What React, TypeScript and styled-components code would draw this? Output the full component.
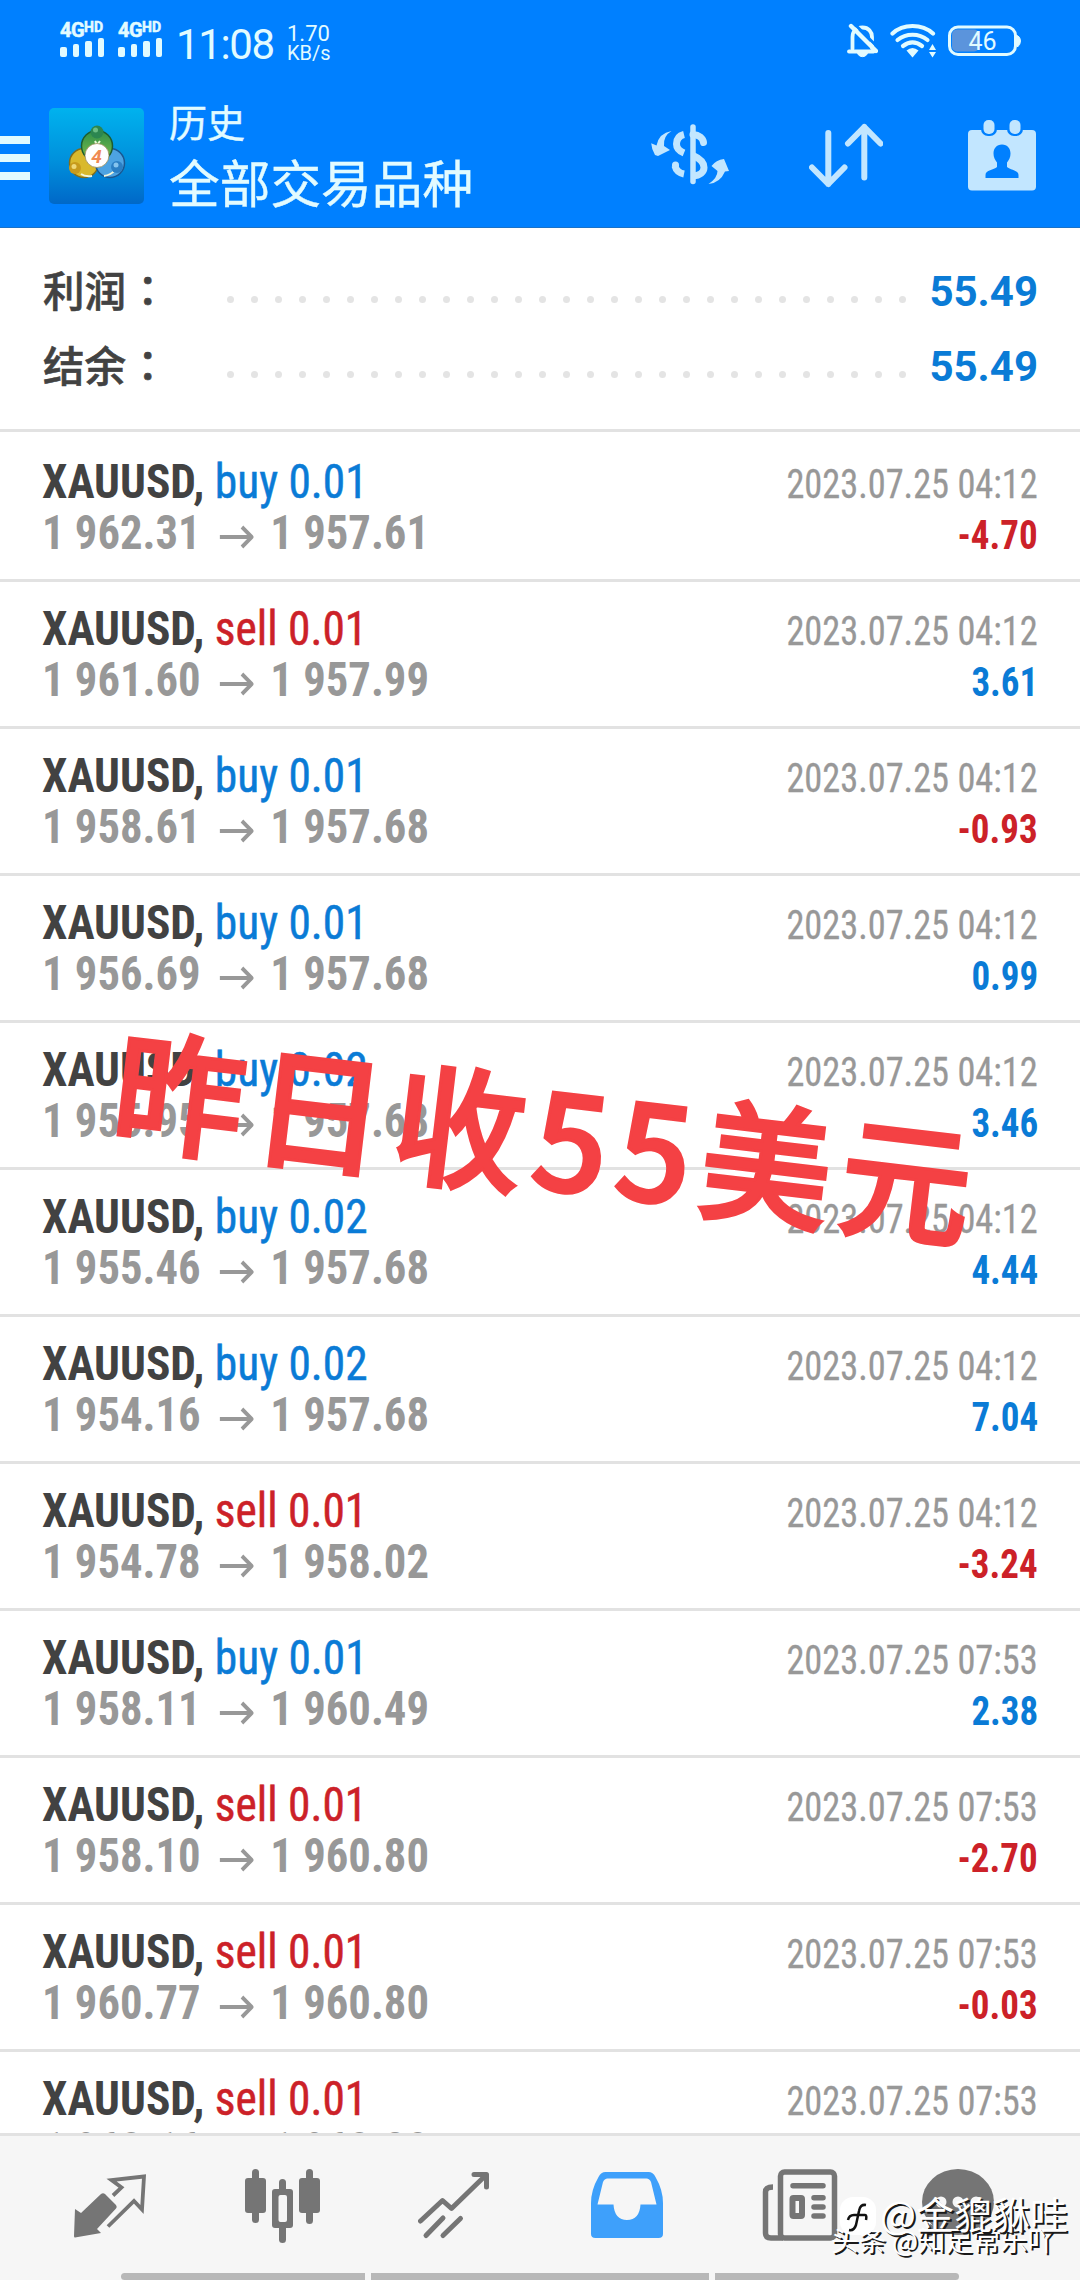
import React from "react";
import styled, { createGlobalStyle } from "styled-components";

const BLUE = "#0a7bd6";
const RED = "#cc2128";
const PALE = "#c2e6ff";
const GREY = "#757575";
const CJK = `"Noto Sans CJK SC"`;

const GlobalStyle = createGlobalStyle`
  * { box-sizing: border-box; }
  body { margin: 0; background: #fff; font-family: Roboto, ${CJK}, sans-serif; }
`;

const Screen = styled.div`
  position: relative;
  width: 1080px;
  height: 2280px;
  overflow: hidden;
  display: flex;
  flex-direction: column;
  background: #fff;
`;

const Header = styled.header`
  height: 228px;
  flex: none;
  background: #0080ff;
  border-bottom: 1px solid #1a72c8;
  color: #e2fbff;
`;

const StatusBar = styled.div`
  height: 84px;
  padding: 22px 59px 0 60px;
  display: flex;
  align-items: flex-start;
`;

const Signal = styled.div`
  width: 58px;
`;

const SignalLabel = styled.div`
  display: flex;
  font: 700 20px/16px Roboto, sans-serif;
  letter-spacing: -0.5px;
  -webkit-text-stroke: 0.5px #e2fbff;
  sup { font-size: 14px; line-height: 11px; letter-spacing: 0; }
`;

const SignalBars = styled.div`
  display: flex;
  align-items: flex-end;
  gap: 6px;
  height: 19px;
`;

const Bar = styled.i<{ $h: number }>`
  width: 6.5px;
  height: ${(p) => p.$h}px;
  border-radius: 2px;
  background: #e2fbff;
`;

const Clock = styled.div`
  font: 400 42px/46px Roboto, sans-serif;
  letter-spacing: -1.4px;
  width: 111px;
`;

const Speed = styled.div`
  display: flex;
  flex-direction: column;
  font: 400 22px/20px Roboto, sans-serif;
  padding-top: 2px;
  span + span { font-size: 20px; line-height: 19px; }
`;

const StatusIcons = styled.div`
  display: flex;
  gap: 12px;
  margin: 1px 0 0 auto;
`;

const Toolbar = styled.div`
  display: flex;
  align-items: flex-start;
  height: 143px;
  padding-right: 44px;
`;

const Burger = styled.div`
  width: 30px;
  display: flex;
  flex-direction: column;
  gap: 10px;
  margin-top: 52px;
  i { height: 8px; background: #e2fbff; }
`;

const AppLogo = styled.svg`
  margin: 24px 0 0 19px;
  flex: none;
`;

const Titles = styled.div`
  margin-left: 24px;
  font-family: ${CJK}, sans-serif;
  -webkit-text-stroke: 0.4px #e2fbff;
`;

const Subtitle = styled.div`
  font-size: 38px;
  line-height: 44px;
  margin-top: 15px;
`;

const Title = styled.div`
  font-size: 50.7px;
  line-height: 60px;
  margin-top: 8px;
`;

const Actions = styled.div`
  display: flex;
  margin-left: auto;
  gap: 85px;
  margin-top: 36px;
  svg { display: block; }
  svg:first-child { margin-right: -5px; }
`;

const Summary = styled.section`
  flex: none;
  height: 204px;
  padding: 26px 42px 0 43px;
  border-bottom: 3px solid #e2e2e2;
`;

const SummaryRow = styled.div`
  display: flex;
  align-items: center;
  height: 75px;
`;

const SummaryLabel = styled.div`
  width: 184px;
  padding-bottom: 6px;
  font: 500 41.500px/60px ${CJK}, sans-serif;
  color: #424242;
  -webkit-text-stroke: 0.6px #424242;
  span { font-family: "Noto Sans CJK JP", sans-serif; margin-left: 1px; }
`;

const Dots = styled.div`
  display: flex;
  justify-content: space-between;
  width: 679px;
  margin-top: 15px;
  i { width: 7px; height: 7px; border-radius: 50%; background: #e4e4e4; }
`;

const SummaryValue = styled.div`
  margin-left: auto;
  font: 700 42px/60px Roboto, sans-serif;
  color: ${BLUE};
`;

const List = styled.main`
  flex: none;
  height: 1701px;
  overflow: hidden;
`;

const Deal = styled.article`
  height: 147px;
  padding: 21px 42px 0 42px;
  border-bottom: 3px solid #e2e2e2;
  font-family: "Roboto Condensed", Roboto, sans-serif;
  font-stretch: 75%;
  &:first-child { height: 150px; padding-top: 24px; }
`;

const Line = styled.div`
  display: flex;
  justify-content: space-between;
  align-items: baseline;
  height: 51px;
  line-height: 51px;
`;

const Symbol = styled.div`
  font-size: 48px;
  font-weight: 700;
  color: #424242;
  transform: scaleX(0.945);
  transform-origin: left;
`;

const Side = styled.span<{ $sell: boolean }>`
  font-weight: 400;
  -webkit-text-stroke: 0.5px currentColor;
  color: ${(p) => (p.$sell ? RED : BLUE)};
`;

const Time = styled.div`
  font-size: 40px;
  color: #989898;
  -webkit-text-stroke: 0.3px #989898;
  transform: scaleX(0.908);
  transform-origin: right;
`;

const Prices = styled.div`
  font-size: 48px;
  font-weight: 700;
  color: #989898;
  display: flex;
  align-items: baseline;
  transform: scaleX(0.93);
  transform-origin: left;
  svg { margin: 0 18px 0 20px; }
`;

const Profit = styled.div<{ $loss: boolean }>`
  font-size: 40px;
  font-weight: 700;
  color: ${(p) => (p.$loss ? RED : BLUE)};
  transform: scaleX(0.925);
  transform-origin: right;
`;

const TabBar = styled.nav`
  flex: none;
  height: 147px;
  background: #f6f6f6;
  border-top: 3px solid #e2e2e2;
  display: flex;
  flex-direction: column;
  justify-content: space-between;
`;

const Tabs = styled.div`
  display: flex;
  gap: 97.5px;
  padding: 32px 0 0 73px;
  svg:nth-child(4) { margin: 0 2px 0 3px; }
  svg:last-child { margin-left: -14px; }
`;

const GestureBar = styled.div`
  display: flex;
  justify-content: center;
  gap: 6px;
  height: 7px;
`;

const Segment = styled.i<{ $w: number; $round?: string }>`
  width: ${(p) => p.$w}px;
  background: #b8b8b8;
  border-radius: ${(p) => p.$round || "0"};
`;

const Caption = styled.div`
  position: absolute;
  left: 112px;
  top: 1042px;
  font: 500 132px/180px ${CJK}, sans-serif;
  letter-spacing: 8.8px;
  -webkit-text-stroke: 3px #f44144;
  white-space: nowrap;
  color: #f44144;
  transform: rotate(6.8deg);
`;

const Watermark = styled.div<{ $x: number; $y: number; $size: number }>`
  position: absolute;
  left: ${(p) => p.$x}px;
  top: ${(p) => p.$y}px;
  display: flex;
  align-items: center;
  font: 400 ${(p) => p.$size}px/44px ${CJK}, sans-serif;
  white-space: nowrap;
  color: #fff;
  text-shadow: 2px 1.5px 0 #1a1a1a;
`;

const MarkBadge = styled.svg`
  margin-right: 2px;
`;

const SignalBlock = () => (
  <Signal>
    <SignalLabel>4G<sup>HD</sup></SignalLabel>
    <SignalBars>
      <Bar $h={10} /><Bar $h={13} /><Bar $h={16} /><Bar $h={19} />
    </SignalBars>
  </Signal>
);

const BellOff = () => (
  <svg width="31" height="36" viewBox="847.5 24 31 36" fill="none" stroke="#e2fbff" strokeWidth="3.8" strokeLinecap="round" strokeLinejoin="round">
    <path d="M853 50V38C853 32 857 28.500 863 28.500S872.500 33 872.500 38V49" />
    <path d="M849.500 52.500H874" />
    <path d="M858 54C859 59 867 59 868 54Z" fill="#e2fbff" strokeWidth="1" />
    <path d="M855.500 25.500L878.500 48.500" stroke="#0080ff" strokeWidth="3" />
    <path d="M851.500 27L876.500 52" strokeWidth="4.400" />
  </svg>
);

const Wifi = () => (
  <svg width="46" height="36" viewBox="890 24 46 36" fill="none" stroke="#e2fbff" strokeWidth="4.200" strokeLinecap="round">
    <path d="M892.500 34.500C903 24.500 922 24.500 933 34.500" />
    <path d="M897.500 41C906 34 919 34 927.500 41" />
    <path d="M903 47C909 42.500 916 42.500 922 47" />
    <path d="M906.500 51.500Q912.500 46.500 918.500 51.500L912.500 58.500Z" fill="#e2fbff" stroke="none" />
    <path d="M929 51L932.500 45L936 51ZM929 53L932.500 58.500L936 53Z" fill="#e2fbff" stroke="none" />
  </svg>
);

const Battery = () => (
  <svg width="73" height="36" viewBox="948 24 73 36">
    <rect x="952" y="30.500" width="27" height="22" rx="5" fill="#5b94dc" />
    <rect x="949.500" y="28" width="66" height="27.500" rx="8.500" fill="none" stroke="#e2fbff" strokeWidth="3" />
    <path d="M1017.500 36.500Q1020.500 38.500 1020.500 42T1017.500 48Z" fill="#e2fbff" stroke="#e2fbff" />
    <text x="982.500" y="50.500" textAnchor="middle" fontFamily="Roboto" fontSize="25" fill="#e2fbff">46</text>
  </svg>
);

const Logo = () => (
  <AppLogo width="96" height="96" viewBox="48 108 96 96">
    <defs>
      <linearGradient id="sky" x1="0" y1="0" x2="0" y2="1">
        <stop offset="0" stopColor="#00b2ee" />
        <stop offset="0.55" stopColor="#0090dc" />
        <stop offset="1" stopColor="#0068c8" />
      </linearGradient>
      <linearGradient id="leaf" x1="0" y1="0" x2="0" y2="1">
        <stop offset="0" stopColor="#2f8f4a" /><stop offset="1" stopColor="#7fc04a" />
      </linearGradient>
    </defs>
    <rect x="48" y="108" width="95" height="96" rx="5" fill="url(#sky)" />
    <circle cx="83" cy="163" r="14.500" fill="#d9b92c" stroke="#806d1c" strokeWidth="1.500" />
    <circle cx="109" cy="163" r="14.500" fill="#4da3e2" stroke="#1a5790" strokeWidth="1.500" />
    <circle cx="96" cy="146" r="15.500" fill="url(#leaf)" stroke="#1c5c30" strokeWidth="1.500" />
    <path d="M94 141L96 145L99 141" stroke="#e9f8d8" strokeWidth="2" fill="none" />
    <path d="M80 174Q84 177 91 176M103 176Q110 175 114 170" stroke="#f2f6dc" strokeWidth="2" fill="none" />
    <circle cx="96" cy="132" r="6.500" fill="#2c8650" /><circle cx="94.500" cy="130" r="2.500" fill="#6bbd84" />
    <circle cx="74" cy="168" r="6" fill="#c79a1c" /><circle cx="73" cy="166.500" r="2.500" fill="#efd878" />
    <circle cx="116" cy="167" r="6" fill="#2b7fc4" /><circle cx="115" cy="165" r="2.500" fill="#86c4ee" />
    <circle cx="96" cy="155.500" r="12" fill="#fff" stroke="#9b8d58" strokeWidth="0.800" />
    <text x="95.500" y="162.500" textAnchor="middle" fontFamily="Roboto" fontWeight="700" fontStyle="italic" fontSize="19" fill="#f08a52">4</text>
  </AppLogo>
);

const CurrencyIcon = () => (
  <svg width="78" height="72" viewBox="651 120 78 72" fill="none" stroke={PALE} strokeWidth="7">
    <path d="M684 134.500C678 136 676.500 140 676.500 144S679 151 684 153" />
    <path d="M675 166C676 170 679 173 684 174" />
    <path d="M675.500 165V165.500" strokeLinecap="round" />
    <path d="M693 134.500C699 135 703 138 703.500 142.500" strokeLinecap="round" />
    <path d="M693 155.500C701 159 704 162.500 704 167.500C704 172 700 175.500 693 176" />
    <path d="M693 127V181.500" strokeWidth="5.500" strokeLinecap="round" />
    <g fill={PALE} stroke="none">
      <path d="M671.500 131Q663 136 664 146L670 150L658 156L655 155Q651.500 149 651.200 143.300L656.500 145.500Q659 133 671.500 131Z" />
      <path d="M708.500 184Q717.500 178 717.500 171L711.500 166Q716 160 724 159L729 171L725 171.500Q720 183 708.500 184Z" />
    </g>
  </svg>
);

const SortIcon = () => (
  <svg width="74" height="72" viewBox="809 120 74 72" fill="none" stroke={PALE} strokeWidth="6" strokeLinecap="round" strokeLinejoin="round">
    <path d="M828.300 133V184M812 167.500L828.300 184L844.500 167.500" />
    <path d="M864.300 177.500V127M848 143.500L864.300 127L880.500 143.500" />
  </svg>
);

const CalendarIcon = () => (
  <svg width="68" height="72" viewBox="968 120 68 72">
    <rect x="968" y="130" width="68" height="60.500" rx="4" fill={PALE} />
    <rect x="981" y="117" width="16" height="19" rx="7" fill="#0080ff" />
    <rect x="1007" y="117" width="16" height="19" rx="7" fill="#0080ff" />
    <rect x="983.500" y="120" width="11" height="14" rx="5" fill={PALE} />
    <rect x="1009.500" y="120" width="11" height="14" rx="5" fill={PALE} />
    <path d="M1002 144.500C1007.500 144.500 1010.500 148.500 1010.500 153.500C1010.500 157.500 1009 160 1007 162.500V167C1010 170 1018.500 170 1018.500 175V178H985.500V175C985.500 170 994 170 997 167V162.500C995 160 993.500 157.500 993.500 153.500C993.500 148.500 996.500 144.500 1002 144.500Z" fill="#0080ff" />
  </svg>
);

const PriceArrow = () => (
  <svg width="37" height="24" viewBox="0 0 37 24" fill="none" stroke="#989898" strokeWidth="4">
    <path d="M0 12H34M24 2L34.500 12L24 22" strokeLinejoin="round" />
  </svg>
);

const QuotesIcon = () => (
  <svg width="74" height="76" viewBox="73 2168 74 76" fill="none" stroke={GREY} strokeWidth="3.800">
    <path d="M75 2209L81 2213L101 2194Q103 2192.500 105 2194L116 2205Q117.500 2207 116 2208.500L97 2229L101 2233L75 2237.500Q74 2237.500 74 2236Z" fill={GREY} stroke="none" />
    <path d="M113 2195.500L121.500 2187.500L111.500 2180L144 2176.500L142 2209.500L134 2201L108 2226.500" />
  </svg>
);

const ChartIcon = () => (
  <svg width="76" height="76" viewBox="244 2168 76 76" fill={GREY}>
    <rect x="244" y="2178" width="21" height="35" rx="3" /><rect x="251" y="2169" width="7" height="54" rx="3.500" />
    <rect x="298" y="2178" width="21" height="35" rx="3" /><rect x="305" y="2169" width="7" height="55" rx="3.500" />
    <rect x="278" y="2179" width="7" height="64" rx="3.500" />
    <rect x="271" y="2189" width="21" height="39" rx="3" /><rect x="277.500" y="2195" width="8.500" height="27" rx="2" fill="#f6f6f6" />
  </svg>
);

const TradeIcon = () => (
  <svg width="72" height="76" viewBox="418 2168 72 76" fill="none" stroke={GREY} strokeWidth="5" strokeLinecap="round" strokeLinejoin="round">
    <path d="M420.500 2221L442.500 2200.500L451.500 2208.500L485 2176" />
    <path d="M474 2174.500H486.500V2187" />
    <path d="M426 2235.500L443 2218M443 2235.500L460.500 2218.500" />
  </svg>
);

const InboxIcon = () => (
  <svg width="72" height="76" viewBox="590.500 2168 72 76">
    <path fillRule="evenodd" fill="#3ea0fb" d="M605 2172H648Q652.500 2172 655 2177Q662.500 2190 662.500 2203V2234Q662.500 2238 658 2238H595Q590.500 2238 590.500 2234V2203Q590.500 2190 598 2177Q600.500 2172 605 2172ZM607 2178.500Q604 2178.500 602.500 2182L597 2204.500H613Q614 2220 626.500 2220T640 2204.500H656L650.500 2182Q649 2178.500 646 2178.500Z" />
  </svg>
);

const NewsIcon = () => (
  <svg width="76" height="76" viewBox="762 2168 76 76" fill="none" stroke={GREY} strokeWidth="5.500">
    <rect x="780.500" y="2172" width="54" height="66" rx="4" />
    <path d="M773 2187Q765.500 2187 765.500 2192V2233Q765.500 2238 771 2238H783" />
    <path d="M793 2185.800H823M814 2197.800H823M814 2207H823M814 2216H823" strokeLinecap="round" />
    <rect x="792.500" y="2198" width="9.500" height="18" rx="1" strokeWidth="6" />
  </svg>
);

const ChatIcon = () => (
  <svg width="73" height="76" viewBox="922 2168 73 76">
    <ellipse cx="958" cy="2202" rx="36" ry="33" fill={GREY} />
    <path d="M930 2224L925 2238L946 2232Z" fill={GREY} />
    <circle cx="941" cy="2202" r="5.500" fill="#f6f6f6" /><circle cx="958" cy="2202" r="5.500" fill="#f6f6f6" /><circle cx="976" cy="2202" r="5.500" fill="#f6f6f6" />
  </svg>
);

type DealData = [side: string, lot: string, open: string, close: string, time: string, profit: string];

const deals: DealData[] = [
  ["buy", "0.01", "1 962.31", "1 957.61", "04:12", "-4.70"],
  ["sell", "0.01", "1 961.60", "1 957.99", "04:12", "3.61"],
  ["buy", "0.01", "1 958.61", "1 957.68", "04:12", "-0.93"],
  ["buy", "0.01", "1 956.69", "1 957.68", "04:12", "0.99"],
  ["buy", "0.02", "1 955.95", "1 957.68", "04:12", "3.46"],
  ["buy", "0.02", "1 955.46", "1 957.68", "04:12", "4.44"],
  ["buy", "0.02", "1 954.16", "1 957.68", "04:12", "7.04"],
  ["sell", "0.01", "1 954.78", "1 958.02", "04:12", "-3.24"],
  ["buy", "0.01", "1 958.11", "1 960.49", "07:53", "2.38"],
  ["sell", "0.01", "1 958.10", "1 960.80", "07:53", "-2.70"],
  ["sell", "0.01", "1 960.77", "1 960.80", "07:53", "-0.03"],
  ["sell", "0.01", "1 960.16", "1 960.80", "07:53", ""],
];

const totals = [["利润", "55.49"], ["结余", "55.49"]];

export default function App() {
  return (
    <>
      <GlobalStyle />
      <Screen>
        <Header>
          <StatusBar>
            <SignalBlock />
            <SignalBlock />
            <Clock>11:08</Clock>
            <Speed><span>1.70</span><span>KB/s</span></Speed>
            <StatusIcons><BellOff /><Wifi /><Battery /></StatusIcons>
          </StatusBar>
          <Toolbar>
            <Burger><i /><i /><i /></Burger>
            <Logo />
            <Titles>
              <Subtitle>历史</Subtitle>
              <Title>全部交易品种</Title>
            </Titles>
            <Actions><CurrencyIcon /><SortIcon /><CalendarIcon /></Actions>
          </Toolbar>
        </Header>
        <Summary>
          {totals.map(([label, value]) => (
            <SummaryRow key={label}>
              <SummaryLabel>{label}<span>：</span></SummaryLabel>
              <Dots>{Array.from({ length: 29 }, (_, i) => <i key={i} />)}</Dots>
              <SummaryValue>{value}</SummaryValue>
            </SummaryRow>
          ))}
        </Summary>
        <List>
          {deals.map(([side, lot, open, close, time, profit], i) => (
            <Deal key={i}>
              <Line>
                <Symbol>XAUUSD, <Side $sell={side === "sell"}>{side} {lot}</Side></Symbol>
                <Time>2023.07.25 {time}</Time>
              </Line>
              <Line>
                <Prices><span>{open}</span><PriceArrow /><span>{close}</span></Prices>
                {profit && <Profit $loss={profit.startsWith("-")}>{profit}</Profit>}
              </Line>
            </Deal>
          ))}
        </List>
        <TabBar>
          <Tabs><QuotesIcon /><ChartIcon /><TradeIcon /><InboxIcon /><NewsIcon /><ChatIcon /></Tabs>
          <GestureBar>
            <Segment $w={244} $round="4px 0 0 4px" /><Segment $w={338} /><Segment $w={244} $round="0 4px 4px 0" />
          </GestureBar>
        </TabBar>
        <Caption>昨日收55美元</Caption>
        <Watermark $x={831} $y={2217} $size={27.4}>头条 @知足常乐吖</Watermark>
        <Watermark $x={840} $y={2191} $size={38}>
          <MarkBadge width="38" height="44" viewBox="0 0 38 44">
            <rect x="0" y="6" width="36" height="38" rx="13" fill="#fff" />
            <path d="M26 14Q20 13 19 20L16 34Q14 40 9 39M8 29Q9 24 14 24H25Q27 24 26 29" stroke="#111" strokeWidth="2.500" fill="none" />
          </MarkBadge>
          @金貔貅哇
        </Watermark>
      </Screen>
    </>
  );
}
